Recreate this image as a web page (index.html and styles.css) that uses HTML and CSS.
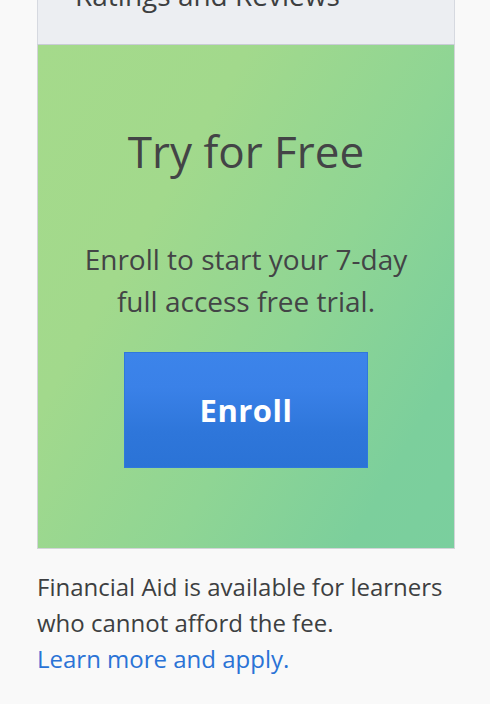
FILE: index.html
```html
<!DOCTYPE html>
<html>
<head>
<meta charset="utf-8">
<link rel="stylesheet" href="styles.css">
</head>
<body>
<div class="page">
  <div class="ratings">
    <div class="ratings-title">Ratings and Reviews</div>
  </div>
  <div class="trial">
    <h2 class="trial-title">Try for Free</h2>
    <p class="trial-text">Enroll to start your 7-day<br>full access free trial.</p>
    <a class="enroll-btn">Enroll</a>
  </div>
  <p class="aid">Financial Aid is available for learners who cannot afford the fee.</p>
  <a class="aid-link">Learn more and apply.</a>
</div>
</body>
</html>
```
FILE: styles.css
```css
html, body {
  margin: 0;
  padding: 0;
  background: #f9f9f9;
  font-family: "Open Sans", "Noto Sans", sans-serif;
  color: #3d3f41;
}
.page {
  width: 418px;
  margin-left: 37px;
}
.ratings {
  overflow: hidden;
  background: #eceef2;
  border-left: 1px solid #d6d9e0;
  border-right: 1px solid #d6d9e0;
  border-bottom: 1px solid #c9ccd6;
  box-sizing: border-box;
  height: 45px;
}
.ratings-title {
  font-size: 28px;
  line-height: 30px;
  margin-top: -20px;
  padding-left: 37px;
  color: #3d3f41;
}
.trial {
  border: 1px solid #d2d4d8;
  border-top: none;
  background: linear-gradient(120deg, #a5da8b 0%, #a2d98c 30%, #8fd594 60%, #7ccf9c 85%, #7acf9e 100%);
  height: 504px;
  box-sizing: border-box;
  padding-top: 82px;
  display: flex;
  flex-direction: column;
  align-items: center;
  text-align: center;
}
.trial-title {
  margin: 0;
  font-size: 44px;
  font-weight: 400;
  line-height: 48px;
  color: #434446;
}
.trial-text {
  margin: 63px 0 0;
  font-size: 28px;
  line-height: 42px;
  color: #434446;
}
.enroll-btn {
  margin-top: 30px;
  width: 244px;
  height: 116px;
  box-sizing: border-box;
  border: 1px solid #2f78dc;
  background: linear-gradient(180deg, #3c84ea 0%, #3a81e8 30%, #2e76da 70%, #2b73d6 100%);
  color: #fff;
  font-size: 31px;
  font-weight: 700;
  display: flex;
  align-items: center;
  justify-content: center;
  letter-spacing: 0.5px;
}
.aid {
  margin: 20px 0 0;
  font-size: 24px;
  line-height: 36px;
  color: #3d3f41;
}
.aid-link {
  display: block;
  font-size: 24px;
  line-height: 36px;
  color: #2a73d6;
}
```
